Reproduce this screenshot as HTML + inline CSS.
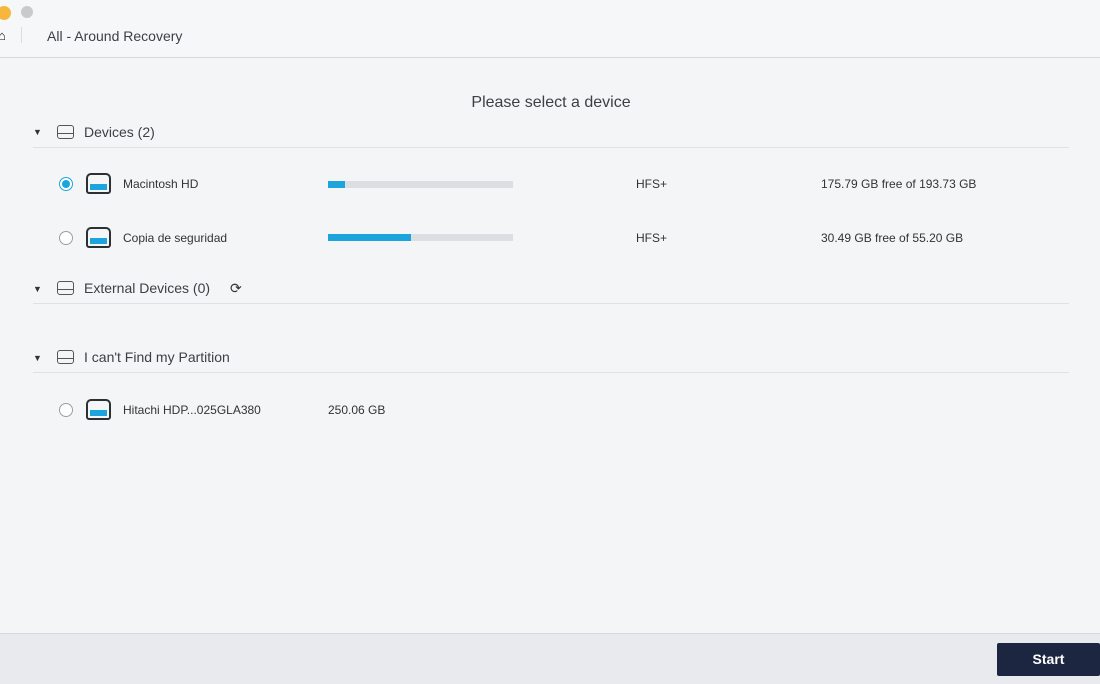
<!DOCTYPE html>
<html><head><meta charset="utf-8"><style>
*{margin:0;padding:0;box-sizing:border-box}
body{width:1100px;height:684px;background:#f4f5f7;font-family:"Liberation Sans",sans-serif;color:#333;position:relative;overflow:hidden}
.a{position:absolute}
.t{font-size:14px;color:#3c3f44}
.s{font-size:12px;color:#333}
.line{position:absolute;left:33px;width:1036px;height:1px;background:#dfe1e4}
.bar{position:absolute;left:328px;width:185px;height:7px;background:#dcdee2}
.bar i{display:block;height:7px;background:#1ba5dc}
.radio{position:absolute;left:59px;width:14px;height:14px;border:1px solid #9a9ea4;border-radius:50%;background:#fff}
.drive{position:absolute;left:86px;width:25px;height:21px;border:2px solid #2b3035;border-radius:5px 5px 3px 3px}
.drive i{position:absolute;left:2px;right:2px;bottom:2px;height:6px;background:#1ba5dc}
.hd{position:absolute;left:57px;width:17px;height:14px;border:1.3px solid #555;border-radius:3px}
.hd:after{content:"";position:absolute;left:0;right:0;top:7px;border-top:1.3px solid #555}
.car{position:absolute;left:33px;font-size:9px;color:#333}
</style></head><body>
<div class="a" style="left:0;top:0;width:1100px;height:58px;background:#f6f7f8;border-bottom:1px solid #d6d8db"></div>
<div class="a" style="left:-3px;top:6px;width:14px;height:14px;border-radius:50%;background:#f6b73c"></div>
<div class="a" style="left:21px;top:6px;width:12px;height:12px;border-radius:50%;background:#c9cacc"></div>
<div class="a" style="left:-2px;top:28px;font-size:13px;color:#111">⌂</div>
<div class="a" style="left:21px;top:27px;width:1px;height:16px;background:#ddd"></div>
<div class="a t" style="left:47px;top:28px">All - Around Recovery</div>
<div class="a" style="left:0;top:94px;width:1100px;text-align:center;font-size:16px;color:#3c3f44;padding-left:2px">Please select a device</div>

<div class="car" style="top:127px">▼</div><div class="hd" style="top:125px"></div>
<div class="a t" style="left:84px;top:124px">Devices (2)</div>
<div class="line" style="top:147px"></div>

<div class="radio" style="top:177px;border-color:#1ba5dc"><div style="margin:2px;width:8px;height:8px;border-radius:50%;background:#1ba5dc"></div></div>
<div class="drive" style="top:173px"><i></i></div>
<div class="a s" style="left:123px;top:177px">Macintosh HD</div>
<div class="bar" style="top:181px"><i style="width:17px"></i></div>
<div class="a s" style="left:636px;top:177px">HFS+</div>
<div class="a s" style="left:821px;top:177px">175.79 GB free of 193.73 GB</div>

<div class="radio" style="top:231px"></div>
<div class="drive" style="top:227px"><i></i></div>
<div class="a s" style="left:123px;top:231px">Copia de seguridad</div>
<div class="bar" style="top:234px"><i style="width:83px"></i></div>
<div class="a s" style="left:636px;top:231px">HFS+</div>
<div class="a s" style="left:821px;top:231px">30.49 GB free of 55.20 GB</div>

<div class="car" style="top:284px">▼</div><div class="hd" style="top:281px"></div>
<div class="a t" style="left:84px;top:280px">External Devices (0)</div>
<div class="a" style="left:230px;top:280px;font-size:14px;color:#333">⟳</div>
<div class="line" style="top:303px"></div>

<div class="car" style="top:353px">▼</div><div class="hd" style="top:350px"></div>
<div class="a t" style="left:84px;top:349px">I can't Find my Partition</div>
<div class="line" style="top:372px"></div>

<div class="radio" style="top:403px"></div>
<div class="drive" style="top:399px"><i></i></div>
<div class="a s" style="left:123px;top:403px">Hitachi HDP...025GLA380</div>
<div class="a s" style="left:328px;top:403px">250.06 GB</div>

<div class="a" style="left:0;top:633px;width:1100px;height:51px;background:#e8eaed;border-top:1px solid #d6d8db"></div>
<div class="a" style="left:997px;top:643px;width:103px;height:33px;background:#1c2640;border-radius:2px;color:#fff;font-weight:bold;font-size:14px;text-align:center;line-height:33px">Start</div>
</body></html>
